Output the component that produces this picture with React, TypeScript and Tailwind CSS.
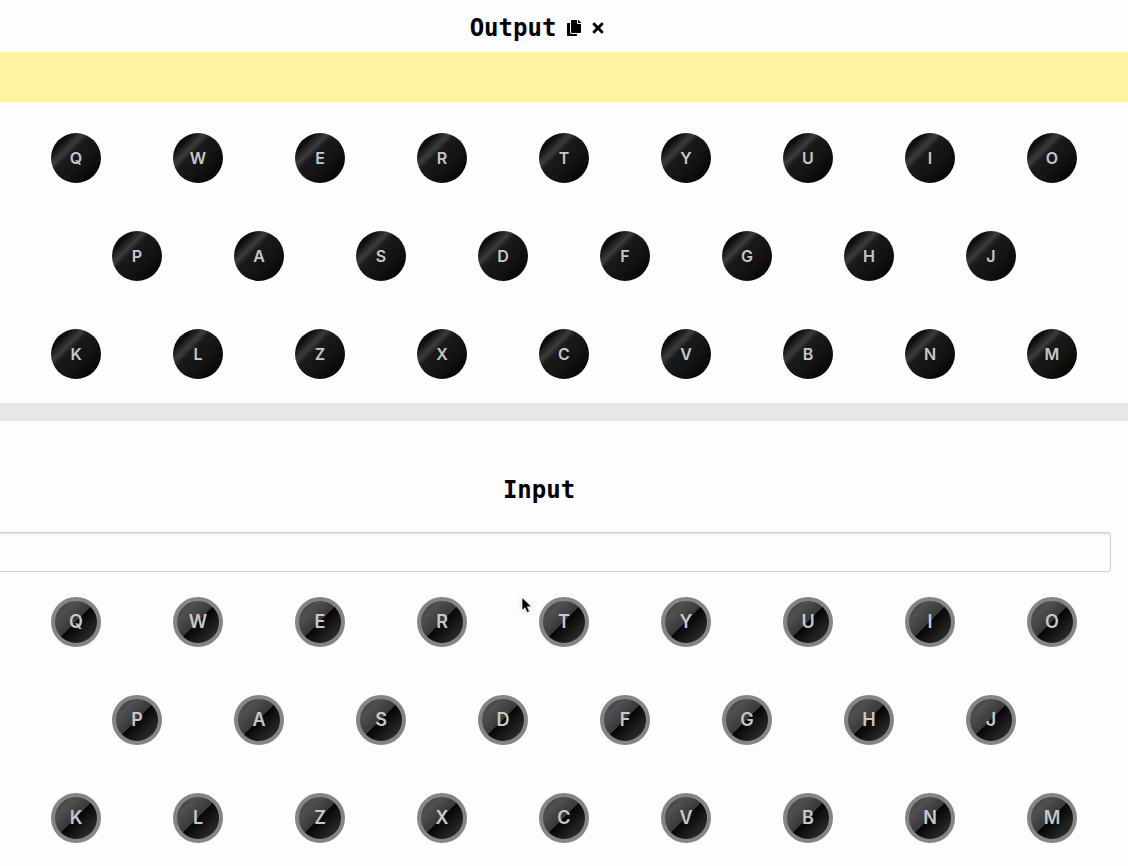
import { useState } from "react";
import { FaCopy, FaTimes } from "react-icons/fa";

const rows = ["QWERTYUIO", "PASDFGHJ", "KLZXCVBNM"];

const lampStyle =
  "text-base bg-[linear-gradient(135deg,#0c0c0c_0%,#0e0e0e_20%,#3c3c3c_33%,#1a1a1a_41%,#141414_60%,#000_100%)]";
const keyStyle =
  "text-lg border-4 border-[#858585] bg-[linear-gradient(135deg,#2c2c2c_0%,#505050_28%,#383838_49%,#060606_50%,#282828_78%,#1c1c1c_100%)] bg-origin-border";

function Keyboard({ onPress }: { onPress?: (letter: string) => void }) {
  return (
    <div className="flex flex-col items-center gap-12 px-[15px]">
      {rows.map((row) => (
        <div
          key={row}
          className={row.length === 8 ? "grid w-8/9 grid-cols-8" : "grid w-full grid-cols-9"}
        >
          {row.split("").map((letter) =>
            onPress ? (
              <button
                key={letter}
                type="button"
                onClick={() => onPress(letter)}
                className={`flex size-[50px] items-center justify-center justify-self-center rounded-full font-semibold text-[#c8c8c8] ${keyStyle}`}
              >
                {letter}
              </button>
            ) : (
              <div
                key={letter}
                className={`flex size-[50px] items-center justify-center justify-self-center rounded-full font-semibold text-[#c8c8c8] ${lampStyle}`}
              >
                {letter}
              </div>
            ),
          )}
        </div>
      ))}
    </div>
  );
}

export default function App() {
  const [text, setText] = useState("");
  return (
    <div className="relative min-h-screen bg-[#fdfdfd] pb-5 font-['Inter',sans-serif] text-black">
      <section aria-label="Output">
        <header className="flex h-[52px] items-center justify-center gap-2.5 pt-1 pr-[52px]">
          <h2 className="font-['DejaVu_Sans_Mono',monospace] text-2xl font-bold">Output</h2>
          <div className="flex gap-2">
            <button type="button" aria-label="Copy output">
              <FaCopy className="size-4" />
            </button>
            <button type="button" aria-label="Clear output" onClick={() => setText("")}>
              <FaTimes className="size-4" />
            </button>
          </div>
        </header>
        <output className="block h-[50px] bg-[#fdf3a0]" />
        <div className="pt-[31px] pb-6">
          <Keyboard />
        </div>
      </section>
      <div className="h-[18px] bg-[#e7e7e7]" />
      <section aria-label="Input">
        <header className="flex justify-center pt-[53px] pr-[50px] pb-[26px]">
          <h2 className="font-['DejaVu_Sans_Mono',monospace] text-2xl font-bold">
            <label htmlFor="message">Input</label>
          </h2>
        </header>
        <div className="pr-[17px]">
          <input
            id="message"
            type="text"
            value={text}
            onChange={(e) => setText(e.target.value)}
            className="block h-10 w-full rounded-r border border-l-0 border-[#cfcfcf] bg-[#fdfdfd] px-3 shadow-[inset_0_2px_2px_-1px_rgba(0,0,0,0.12)] outline-none"
          />
        </div>
        <div className="pt-[25px]">
          <Keyboard onPress={(letter) => setText(text + letter)} />
        </div>
      </section>
      <svg
        className="pointer-events-none absolute top-[596px] left-[521px] h-[19px] w-3 drop-shadow-sm"
        viewBox="0 0 12 18"
        aria-hidden="true"
      >
        <path
          d="M1 1v13l3-2.8 2.1 4.8 2.4-1-2.1-4.7h4.2z"
          fill="#000"
          stroke="#fff"
          strokeWidth="0.7"
        />
      </svg>
    </div>
  );
}
